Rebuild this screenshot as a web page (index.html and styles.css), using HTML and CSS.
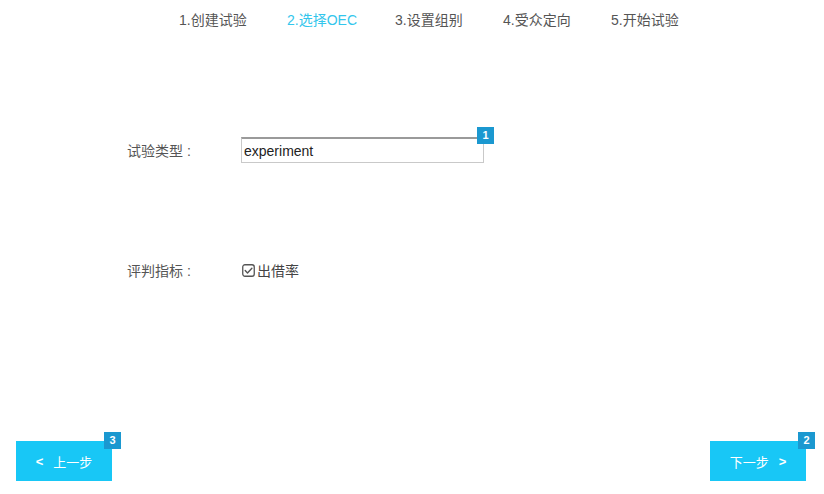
FILE: index.html
```html
<!DOCTYPE html>
<html lang="zh">
<head>
<meta charset="utf-8">
<title>选择OEC</title>
<link rel="stylesheet" href="styles.css">
</head>
<body>
<div class="page">
  <nav class="steps">
    <span class="step">1.创建试验</span>
    <span class="step active">2.选择OEC</span>
    <span class="step">3.设置组别</span>
    <span class="step">4.受众定向</span>
    <span class="step">5.开始试验</span>
  </nav>

  <div class="form">
    <div class="row row-type">
      <span class="label">试验类型 :</span>
      <div class="field">
        <input class="text-input" type="text" value="experiment">
        <span class="badge badge-field">1</span>
      </div>
    </div>
    <div class="row row-metric">
      <span class="label">评判指标 :</span>
      <span class="check">
        <svg class="check-icon" width="13" height="13" viewBox="0 0 13 13" aria-hidden="true">
          <rect x="0.75" y="0.75" width="11.5" height="11.5" rx="2.2" fill="none" stroke="#555" stroke-width="1.3"/>
          <path d="M3.2 6.6 L5.5 8.9 L9.9 4.2" fill="none" stroke="#555" stroke-width="1.4" stroke-linecap="round" stroke-linejoin="round"/>
        </svg>
        <span>出借率</span>
      </span>
    </div>
  </div>

  <div class="actions">
    <button class="btn btn-prev" type="button"><span class="arrow">&lt;</span><span>上一步</span><span class="badge badge-btn">3</span></button>
    <button class="btn btn-next" type="button"><span>下一步</span><span class="arrow">&gt;</span><span class="badge badge-btn">2</span></button>
  </div>
</div>
</body>
</html>
```

FILE: styles.css
```css
* { box-sizing: border-box; }

html, body {
  margin: 0;
  padding: 0;
  background: #ffffff;
}

body {
  font-family: "Liberation Sans", "Noto Sans CJK SC", sans-serif;
  font-size: 14px;
  color: #555;
}

.page {
  width: 824px;
  height: 494px;
  display: flex;
  flex-direction: column;
}

.steps {
  display: flex;
  height: 38px;
  align-items: center;
  padding-left: 179px;
}

.step {
  width: 108px;
  color: #555;
  font-size: 14px;
  white-space: nowrap;
}

.step.active {
  color: #33c6ec;
}

.form {
  display: flex;
  flex-direction: column;
  padding-left: 127px;
}

.row {
  display: flex;
  align-items: center;
}

.row-type {
  margin-top: 99px;
}

.row-metric {
  margin-top: 97px;
}

.label {
  width: 114px;
  color: #555;
  font-size: 14px;
  white-space: nowrap;
}

.field {
  position: relative;
}

.text-input {
  display: block;
  width: 243px;
  height: 26px;
  margin: 0;
  padding: 1px 2px 0;
  border: 1px solid #c9c9c9;
  border-top: 2px solid #9a9a9a;
  border-radius: 0;
  font-family: "Liberation Sans", sans-serif;
  font-size: 14px;
  color: #222;
  background: #fff;
  outline: none;
}

.badge {
  position: absolute;
  width: 17px;
  height: 17px;
  background: #1b98d0;
  color: #fff;
  font-family: "Liberation Sans", sans-serif;
  font-size: 11px;
  font-weight: bold;
  line-height: 17px;
  text-align: center;
}

.badge-field {
  top: -10px;
  right: -10px;
}

.check {
  display: flex;
  align-items: center;
  gap: 2px;
  margin-left: 1px;
  color: #444;
  font-size: 14px;
}

.check-icon {
  display: block;
}

.actions {
  margin-top: auto;
  display: flex;
  justify-content: space-between;
  padding: 0 18px 13px 16px;
}

.btn {
  position: relative;
  display: flex;
  align-items: center;
  justify-content: center;
  gap: 10px;
  width: 96px;
  height: 40px;
  margin: 0;
  padding: 0;
  border: none;
  border-radius: 0;
  background: #18c7f6;
  color: #ffffff;
  font-family: "Liberation Sans", "Noto Sans CJK SC", sans-serif;
  font-size: 13px;
}

.btn .arrow {
  font-size: 13px;
  font-weight: bold;
}

.badge-btn {
  top: -9px;
  right: -9px;
}
```
